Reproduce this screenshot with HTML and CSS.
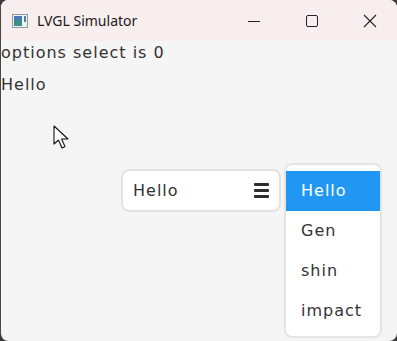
FILE: index.html
```html
<!DOCTYPE html>
<html lang="en">
<head>
  <meta charset="UTF-8"/>
  <title>LVGL Simulator</title>
  <link rel="stylesheet" href="styles.css">
</head>
<body>
  <div class="window">
    <div class="titlebar">
      <svg class="app-icon" width="16" height="14" viewBox="0 0 16 14">
        <rect x="0.5" y="0.5" width="15" height="13" fill="#eef2f4" stroke="#8a9aa4"/>
        <rect x="2" y="2" width="8" height="10" fill="#3e8f8a"/>
        <rect x="2" y="2" width="8" height="4" fill="#4a78b0"/>
        <rect x="12" y="2" width="2" height="6" fill="#5a7a9a"/>
      </svg>
      <span class="title">LVGL Simulator</span>
      <div class="controls">
        <svg width="14" height="14" viewBox="0 0 14 14"><path d="M1 7.5h12" stroke="#222" stroke-width="1"/></svg>
        <svg width="14" height="14" viewBox="0 0 14 14"><rect x="1.5" y="1.5" width="11" height="11" rx="1.5" fill="none" stroke="#222"/></svg>
        <svg width="14" height="14" viewBox="0 0 14 14"><path d="M1 1L13 13M13 1L1 13" stroke="#222" stroke-width="1.1"/></svg>
      </div>
    </div>

    <div class="screen">
      <div class="label">options select is 0</div>
      <div class="label">Hello</div>

      <div class="dropdown-row">
        <div class="dropdown">
          <span>Hello</span>
          <span class="burger"><i></i><i></i><i></i></span>
        </div>
        <ul class="list">
          <li class="selected">Hello</li>
          <li>Gen</li>
          <li>shin</li>
          <li>impact</li>
        </ul>
      </div>

      <!-- mouse pointer -->
      <svg class="cursor" width="18" height="26" viewBox="0 0 18 26">
        <path d="M1 1 L1 19 L5.5 15 L9 23 L12 21.6 L8.6 14 L15 14 Z" fill="#fff" stroke="#111" stroke-width="1.1" stroke-linejoin="round"/>
      </svg>
    </div>
  </div>
</body>
</html>
```

FILE: styles.css
```css
* { box-sizing: border-box; margin: 0; padding: 0; }

body {
  background: #3b3a38;
  width: 397px;
  height: 341px;
  overflow: hidden;
}

.window {
  width: 397px;
  height: 341px;
  border-radius: 8px;
  overflow: hidden;
  background: #f5f5f5;
  border-left: 1px solid #4a4846;
}

.titlebar {
  height: 41px;
  background: #f9eeee;
  display: flex;
  align-items: center;
  padding-left: 11px;
  font-family: "Noto Sans", "Open Sans", sans-serif;
  font-size: 14px;
  color: #1a1a1a;
}

.app-icon { margin-right: 9px; }

.controls {
  margin-left: auto;
  display: flex;
  gap: 44px;
  padding-right: 20px;
}

.screen {
  position: relative;
  height: 300px;
  padding-top: 2px;
  font-family: "DejaVu Sans", "Open Sans", sans-serif;
  font-size: 16px;
  letter-spacing: 1px;
  color: #333;
}

.label {
  line-height: 20px;
  height: 20px;
  margin-bottom: 12px;
}

.dropdown-row {
  display: flex;
  align-items: flex-start;
  margin-top: 68px;
  padding-left: 120px;
  gap: 3px;
}

.dropdown {
  margin-top: 6px;
  width: 160px;
  height: 43px;
  background: #fff;
  border: 2px solid #e6e1e1;
  border-radius: 8px;
  display: flex;
  align-items: center;
  justify-content: space-between;
  padding: 0 10px 0 10px;
}

.burger {
  display: flex;
  flex-direction: column;
  gap: 3px;
  width: 15px;
}

.burger i {
  display: block;
  height: 3px;
  background: #2d2d2d;
  border-radius: 1px;
}

.list {
  list-style: none;
  width: 98px;
  height: 175px;
  background: #fff;
  border: 2px solid #e6e3e3;
  border-radius: 8px;
  padding: 6px 0 5px;
  overflow: hidden;
}

.list li {
  height: 40px;
  line-height: 40px;
  padding-left: 15px;
}

.list li.selected {
  background: #2196f3;
  color: #fff;
}

.cursor {
  position: absolute;
  left: 52px;
  top: 84px;
}
```
